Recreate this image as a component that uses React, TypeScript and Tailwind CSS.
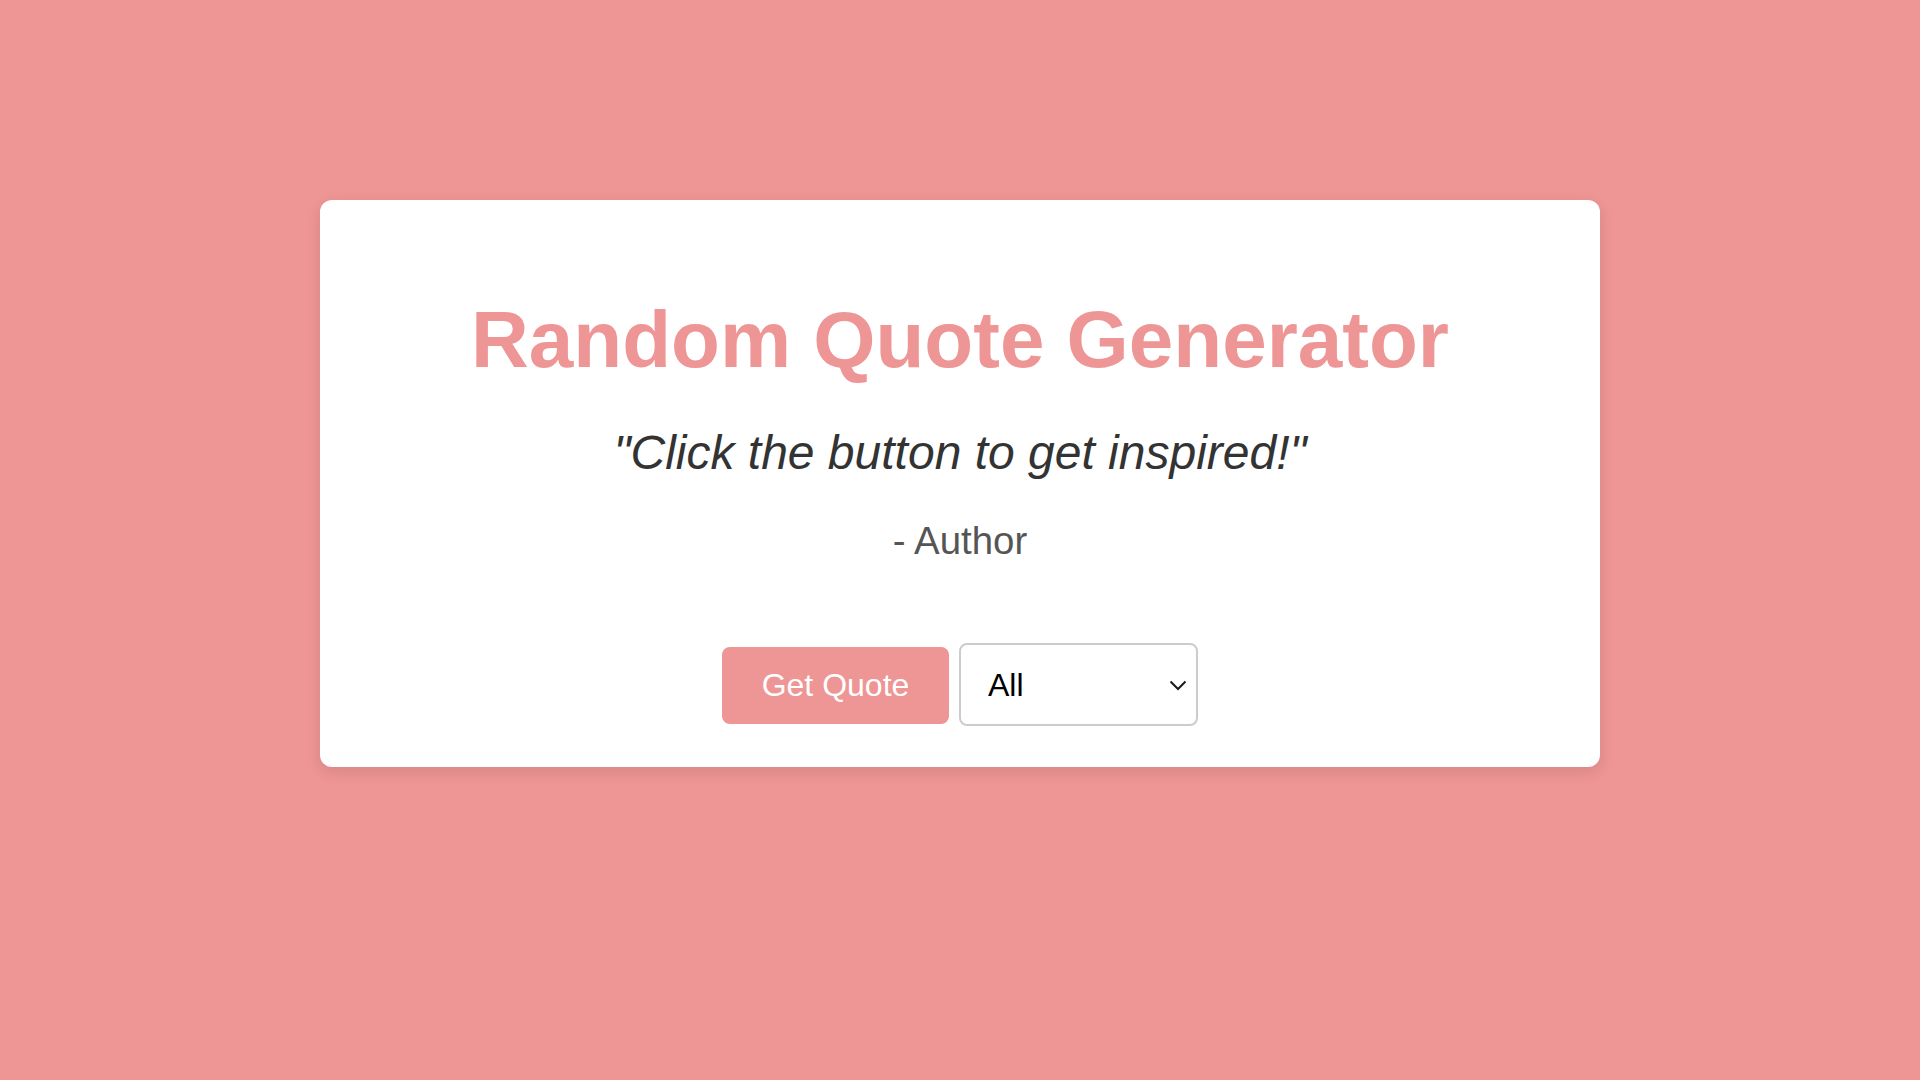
import React from "react";

export default function App() {
  return (
    <div
      className="min-h-screen w-full bg-[#ee9595] pt-[200px]"
      style={{ fontFamily: '"Liberation Sans", Arial, sans-serif' }}
    >
      <div className="mx-auto flex w-[1280px] flex-col items-center rounded-[12px] bg-white pt-[94px] pb-[41px] shadow-[0_5px_15px_rgba(0,0,0,0.1)]">
        <h1 className="text-[80px] font-bold leading-[92px] text-[#ee9595]">
          Random Quote Generator
        </h1>
        <p className="mt-[39px] text-[48px] italic leading-[55px] text-[#333333]">
          "Click the button to get inspired!"
        </p>
        <p className="mt-[39px] text-[38.4px] leading-[44px] text-[#555555]">
          - Author
        </p>
        <div className="mt-[80px] flex items-center gap-[10px]">
          <button className="mt-[2px] h-[77px] w-[227px] rounded-[8px] bg-[#ee9595] text-[32px] leading-[37px] text-white">
            Get Quote
          </button>
          <div className="relative h-[83px] w-[239px]">
            <select
              defaultValue="All"
              className="h-full w-full appearance-none rounded-[8px] border-2 border-[#cccccc] bg-white pl-[27px] text-[32px] text-black outline-none"
              style={{ fontFamily: '"Liberation Sans", Arial, sans-serif' }}
            >
              <option>All</option>
              <option>Inspiration</option>
              <option>Life</option>
              <option>Success</option>
            </select>
            <svg
              className="pointer-events-none absolute right-[11px] top-[37px]"
              width="18"
              height="11"
              viewBox="0 0 18 11"
              fill="none"
            >
              <path d="M1.5 1.5 L9 9 L16.5 1.5" stroke="#1a1a1a" strokeWidth="2" />
            </svg>
          </div>
        </div>
      </div>
    </div>
  );
}
